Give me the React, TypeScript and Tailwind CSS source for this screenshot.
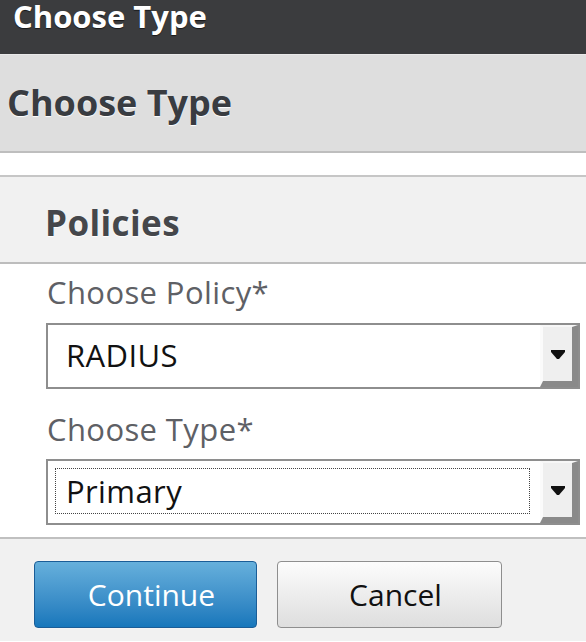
const font = "font-['Open_Sans','DejaVu_Sans',sans-serif]";

const Arrow = () => (
  <svg width="14" height="9" viewBox="0 0 14 9" className="block">
    <path d="M0 0h14v2l-6 7h-2l-6-7z" fill="#111" />
  </svg>
);

type SelectProps = {
  value: string;
  focused?: boolean;
};

const FakeSelect = ({ value, focused }: SelectProps) => (
  <div className="flex h-[66px] border-2 border-[#8e8e8e] bg-white">
    <div className="flex-1 pl-[7px] pt-[7px] pb-[9px] pr-[10px]">
      <div
        className={`flex h-full items-center pl-[10px] text-[31px] leading-none tracking-[0.4px] text-[#111] border ${
          focused ? "border-dotted border-[#444]" : "border-transparent"
        }`}
      >
        {value}
      </div>
    </div>
    <div className="flex w-[38px] items-center justify-center border-l-[3px] border-l-[#fbfbfb] border-t-2 border-t-[#f7f7f7] border-r-[6px] border-r-[#8a8a8a] border-b-[6px] border-b-[#8a8a8a] bg-[#efefef]">
      <Arrow />
    </div>
  </div>
);

const App = () => {
  return (
    <div className={`w-[586px] h-[642px] overflow-hidden bg-white ${font}`}>
      <div className="h-[54px] bg-[#3b3c3e] pl-[13px] pt-[1px]">
        <h1 className="text-[31px] font-bold leading-[30px] text-white [text-shadow:0_1px_1px_rgba(0,0,0,0.6)]">
          Choose Type
        </h1>
      </div>

      <div className="h-[99px] border-t border-t-[#e9e9e9] border-b-2 border-b-[#bebebe] bg-[#dedede] pt-[30px] pl-[7px]">
        <h2 className="text-[36px] font-bold leading-none text-[#393c41] [text-shadow:0_1px_1px_#ffffff]">
          Choose Type
        </h2>
      </div>

      <div className="h-[22px]" />

      <div className="h-[89px] border-t-2 border-t-[#c6c6c6] border-b-2 border-b-[#bdbdbd] bg-[#f1f1f1] pt-[28px] pl-[45px]">
        <h3 className="text-[35px] font-bold leading-none tracking-[0.4px] text-[#45474b] [text-shadow:0_1px_1px_#ffffff]">
          Policies
        </h3>
      </div>

      <div className="h-[273px] pl-[46px] pr-[6px] pt-[13px]">
        <label className="block pl-[1px] text-[31px] leading-none tracking-[0.4px] text-[#5e6065]">
          Choose Policy*
        </label>
        <div className="mt-[15px]">
          <FakeSelect value="RADIUS" />
        </div>

        <label className="mt-[25px] block pl-[1px] text-[31px] leading-none tracking-[0.4px] text-[#5e6065]">
          Choose Type*
        </label>
        <div className="mt-[14px]">
          <FakeSelect value="Primary" focused />
        </div>
      </div>

      <div className="h-[104px] border-t-2 border-t-[#c0c0c0] bg-[#f1f1f1] pl-[34px] pt-[22px]">
        <div className="flex gap-[20px]">
          <button className="flex h-[67px] w-[223px] items-center justify-center rounded-[4px] border border-[#1a5d97] bg-gradient-to-b from-[#66b0dc] to-[#1677bb] pl-[12px] text-[30px] leading-none text-white shadow-[0_0_2px_rgba(255,255,255,0.9)]">
            Continue
          </button>
          <button className="flex h-[67px] w-[225px] items-center justify-center rounded-[4px] border border-[#8e8e8e] bg-gradient-to-b from-[#fcfcfc] to-[#dedede] pl-[12px] text-[30px] leading-none text-[#111]">
            Cancel
          </button>
        </div>
      </div>
    </div>
  );
};

export default App;
